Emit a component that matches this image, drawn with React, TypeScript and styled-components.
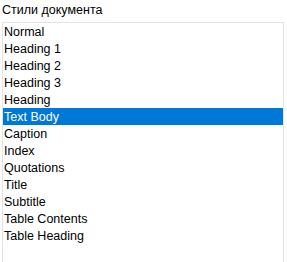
import styled, { createGlobalStyle } from "styled-components";

const GlobalStyle = createGlobalStyle`
  html, body {
    margin: 0;
    padding: 0;
    background: #ffffff;
  }
  body {
    font-family: "Liberation Sans", Arial, sans-serif;
  }
`;

const styles = [
  "Normal",
  "Heading 1",
  "Heading 2",
  "Heading 3",
  "Heading",
  "Text Body",
  "Caption",
  "Index",
  "Quotations",
  "Title",
  "Subtitle",
  "Table Contents",
  "Table Heading",
];

const Panel = styled.div`
  width: 287px;
  height: 262px;
  overflow: hidden;
  padding: 0 3px 0 2px;
  box-sizing: border-box;
  display: flex;
  flex-direction: column;
`;

const Label = styled.div`
  font-size: 12.5px;
  color: #000;
  height: 22px;
  line-height: 22px;
  margin-top: -1px;
  margin-bottom: 1px;
`;

const ListBox = styled.ul`
  list-style: none;
  margin: 0;
  padding: 0;
  height: 260px;
  border: 1px solid #e3e3e3;
  box-sizing: border-box;
  flex-shrink: 0;
`;

const Item = styled.li<{ $selected?: boolean }>`
  box-sizing: border-box;
  height: 17px;
  padding: 2px 0 0 1px;
  line-height: 15px;
  font-size: 12.5px;
  color: ${(p) => (p.$selected ? "#ffffff" : "#000000")};
  background: ${(p) => (p.$selected ? "#0078d7" : "transparent")};
  white-space: nowrap;
`;

const App = () => {
  return (
    <>
      <GlobalStyle />
      <Panel>
        <Label>Стили документа</Label>
        <ListBox>
          {styles.map((s) => (
            <Item key={s} $selected={s === "Text Body"}>
              {s}
            </Item>
          ))}
        </ListBox>
      </Panel>
    </>
  );
};

export default App;
